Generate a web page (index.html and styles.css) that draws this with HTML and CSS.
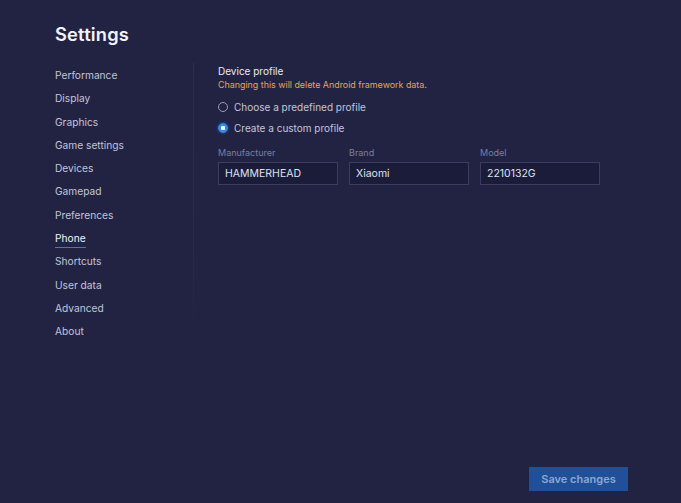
FILE: index.html
```html
<!DOCTYPE html>
<html>
<head>
<meta charset="utf-8">
<link rel="stylesheet" href="styles.css">
</head>
<body>
<div class="page">
  <h1 class="title">Settings</h1>
  <div class="main">
    <nav class="nav">
      <a class="nav-item">Performance</a>
      <a class="nav-item">Display</a>
      <a class="nav-item">Graphics</a>
      <a class="nav-item">Game settings</a>
      <a class="nav-item">Devices</a>
      <a class="nav-item">Gamepad</a>
      <a class="nav-item">Preferences</a>
      <a class="nav-item active">Phone</a>
      <a class="nav-item">Shortcuts</a>
      <a class="nav-item">User data</a>
      <a class="nav-item">Advanced</a>
      <a class="nav-item">About</a>
    </nav>
    <div class="divider"></div>
    <section class="content">
      <div class="section-title">Device profile</div>
      <div class="warning">Changing this will delete Android framework data.</div>
      <div class="radios">
        <label class="radio-row"><span class="radio"></span>Choose a predefined profile</label>
        <label class="radio-row"><span class="radio checked"></span>Create a custom profile</label>
      </div>
      <div class="fields">
        <div class="field">
          <div class="field-label">Manufacturer</div>
          <div class="input">HAMMERHEAD</div>
        </div>
        <div class="field">
          <div class="field-label">Brand</div>
          <div class="input">Xiaomi</div>
        </div>
        <div class="field">
          <div class="field-label">Model</div>
          <div class="input">2210132G</div>
        </div>
      </div>
    </section>
  </div>
  <div class="footer">
    <button class="save">Save changes</button>
  </div>
</div>
</body>
</html>
```
FILE: styles.css
```css
html, body {
  margin: 0;
  padding: 0;
  background: #222343;
}
body {
  font-family: Inter, "Noto Sans", sans-serif;
  color: #c9cce0;
}
.page {
  height: 503px;
  display: flex;
  flex-direction: column;
  box-sizing: border-box;
}
.title {
  margin: 0;
  padding: 22px 0 0 55px;
  font-size: 18.3px;
  font-weight: 600;
  color: #f2f3f8;
  line-height: 24px;
  letter-spacing: 0.2px;
}
.main {
  display: flex;
  flex: 1;
  padding-top: 18px;
}
.nav {
  width: 138px;
  padding-left: 55px;
  display: flex;
  flex-direction: column;
}
.nav-item {
  font-size: 10.2px;
  line-height: 23.3px;
  color: #c2c5da;
  align-self: flex-start;
  position: relative;
}
.nav-item.active {
  color: #f2f3f8;
}
.nav-item.active::after {
  content: "";
  position: absolute;
  left: 0;
  right: 0;
  bottom: 2px;
  height: 1px;
  background: #3b78d8;
}
.divider {
  width: 1px;
  height: 282px;
  margin-top: -1px;
  background: linear-gradient(#2c2e52, #27294b 70%, #222343);
}
.content {
  padding-left: 24px;
  display: flex;
  flex-direction: column;
}
.section-title {
  font-size: 10px;
  line-height: 14px;
  color: #e9eaf2;
}
.warning {
  font-size: 8.9px;
  line-height: 14px;
  color: #e8a44e;
}
.radios {
  display: flex;
  flex-direction: column;
  margin-top: 4px;
}
.radio-row {
  display: flex;
  align-items: center;
  gap: 6px;
  font-size: 10px;
  color: #c2c5da;
  height: 21.5px;
}
.radio {
  width: 8px;
  height: 8px;
  border-radius: 50%;
  border: 1px solid #9a9db5;
  box-sizing: content-box;
}
.radio.checked {
  border: 1px solid #2f8bf2;
  background: radial-gradient(circle, #ffffff 0 2px, #2f8bf2 2.5px);
  box-shadow: 0 0 3px rgba(47, 139, 242, 0.6);
}
.fields {
  display: flex;
  gap: 11.5px;
  margin-top: 8px;
}
.field {
  display: flex;
  flex-direction: column;
  gap: 3px;
}
.field-label {
  font-size: 9px;
  line-height: 12px;
  color: #7a7e9f;
}
.input {
  width: 119.5px;
  height: 23px;
  box-sizing: border-box;
  border: 1px solid #3a3d60;
  background: #1b1c3a;
  color: #dfe1ec;
  font-size: 10.5px;
  padding-left: 6px;
  display: flex;
  align-items: center;
}
.footer {
  display: flex;
  justify-content: flex-end;
  padding: 0 53px 12px 0;
}
.save {
  width: 99px;
  height: 24px;
  border: none;
  background: #21509a;
  color: #8aa6d2;
  font-family: Inter, "Noto Sans", sans-serif;
  font-size: 11px;
  font-weight: 600;
  padding: 0;
}
```
